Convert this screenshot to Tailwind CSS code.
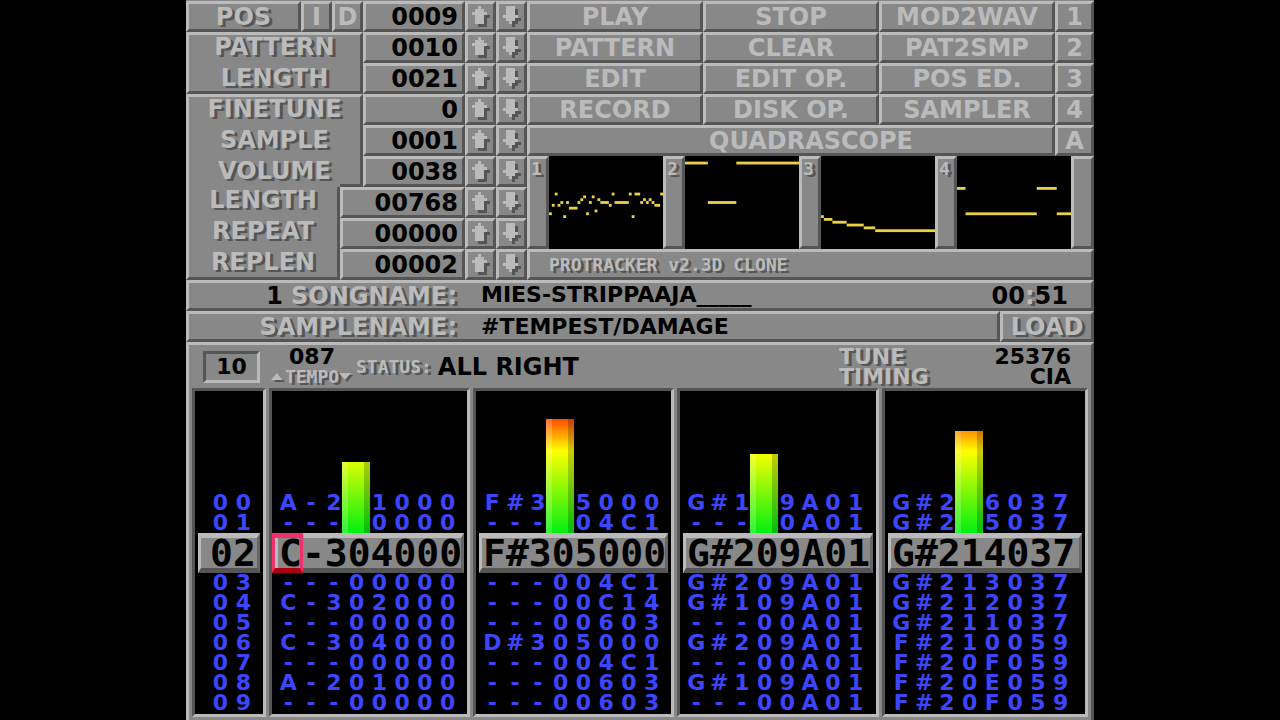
<!DOCTYPE html>
<html lang="en">
<head>
  <meta charset="UTF-8">
  <meta name="viewport" content="width=device-width, initial-scale=1.0">
  <title>ProTracker v2.3D Clone</title>
  <script src="https://cdn.jsdelivr.net/npm/@tailwindcss/browser@4"></script>
</head>
<body class="bg-black font-['DejaVu_Sans',sans-serif] font-bold text-2xl/6 text-[#bbbbbb]">

  <!-- Arrow shapes, used by the value rows -->
  <svg class="hidden">
    <symbol id="up" viewBox="0 0 6 7" shape-rendering="crispEdges">
      <path fill="#555555" d="M3 1h1v1h1v1h1v1h-1v3h-3v-3h-1v-1h1v-1h1z"/>
      <path fill="#bbbbbb" d="M2 0h1v1h1v1h1v1h-1v3h-3v-3h-1v-1h1v-1h1z"/>
    </symbol>
    <symbol id="down" viewBox="0 0 6 7" shape-rendering="crispEdges">
      <path fill="#555555" d="M2 1h3v3h1v1h-1v1h-1v1h-1v-1h-1v-1h-1v-1h1z"/>
      <path fill="#bbbbbb" d="M1 0h3v3h1v1h-1v1h-1v1h-1v-1h-1v-1h-1v-1h1z"/>
    </symbol>
  </svg>

  <main class="w-full max-w-[908px] mx-auto bg-[#888888]">

    <div class="flex pt-px">
      <!-- Position, pattern and sample values -->
      <section class="flex w-[341px] shrink-0">
        <div class="flex-1">
          <div class="flex">
            <div class="flex-1">
              <div class="flex h-[31px] [text-shadow:3px_2px_0_#555]">
                <div class="flex-1 flex items-center justify-center border-3 border-t-[#bbb] border-l-[#bbb] border-r-[#555] border-b-[#555]">POS</div>
                <button class="w-[31px] border-3 border-t-[#bbb] border-l-[#bbb] border-r-[#555] border-b-[#555]">I</button>
                <button class="w-[31px] border-3 border-t-[#bbb] border-l-[#bbb] border-r-[#555] border-b-[#555]">D</button>
              </div>
              <div class="h-[62px] flex flex-col gap-[7px] text-center border-3 border-t-[#bbb] border-l-[#bbb] border-r-[#555] border-b-[#555] [text-shadow:3px_2px_0_#555]">
                <div>PATTERN</div>
                <div>LENGTH</div>
              </div>
              <div class="h-[93px] flex flex-col gap-[7px] text-center border-t-3 border-l-3 border-r-3 border-t-[#bbb] border-l-[#bbb] border-r-[#555] [text-shadow:3px_2px_0_#555]">
                <div>FINETUNE</div>
                <div>SAMPLE</div>
                <div class="-mb-[7px]">VOLUME</div>
                <div class="self-end mt-auto w-5 h-[3px] shrink-0 bg-[#555]"></div>
              </div>
            </div>
            <div id="values" class="w-[102px] text-black"></div>
          </div>
          <div class="flex">
            <div class="flex-1 flex flex-col gap-[7px] h-[93px] pt-px text-center border-l-3 border-r-3 border-b-3 border-l-[#bbb] border-r-[#555] border-b-[#555] [text-shadow:3px_2px_0_#555]">
              <div>LENGTH</div>
              <div>REPEAT</div>
              <div>REPLEN</div>
            </div>
            <div id="longValues" class="w-[125px] text-black"></div>
          </div>
        </div>
        <div id="arrows" class="grid grid-cols-2 w-[62px]"></div>
      </section>

      <!-- Menu buttons, scopes and version -->
      <section class="flex-1">
        <div id="menu" class="grid grid-cols-[176fr_176fr_176fr_39fr] [text-shadow:3px_2px_0_#555]"></div>
        <div class="grid grid-cols-[528fr_39fr] h-[31px] [text-shadow:3px_2px_0_#555]">
          <button class="pl-10 border-3 border-t-[#bbb] border-l-[#bbb] border-r-[#555] border-b-[#555]">QUADRASCOPE</button>
          <button class="border-3 border-t-[#bbb] border-l-[#bbb] border-r-[#555] border-b-[#555]">A</button>
        </div>
        <div class="flex h-[93px] bg-black">
          <div id="scopes" class="flex flex-1"></div>
          <div class="w-[23px] bg-[#888] border-3 border-t-[#bbb] border-l-[#bbb] border-r-[#555] border-b-[#555]"></div>
        </div>
        <div class="h-[31px] flex items-center pl-[19px] border-3 border-t-[#bbb] border-l-[#bbb] border-r-[#555] border-b-[#555] font-['DejaVu_Sans_Mono',monospace] text-[18px]/5 [text-shadow:3px_2px_0_#555]">PROTRACKER v2.3D CLONE</div>
      </section>
    </div>

    <!-- Song name -->
    <div class="flex items-center h-[31px] pr-[23px] border-3 border-t-[#bbb] border-l-[#bbb] border-r-[#555] border-b-[#555]">
      <label for="songname" class="w-[268px] text-right [text-shadow:3px_2px_0_#555]"><span class="text-black [text-shadow:none] mr-2">1</span>SONGNAME:</label>
      <input id="songname" type="text" value="MIES-STRIPPAAJA_____" class="flex-1 min-w-0 ml-6 h-full pb-[2px] text-[22px]/6 text-black outline-none">
      <div class="text-black">00<span class="text-[#bbb] [text-shadow:3px_2px_0_#555]">:</span>51</div>
    </div>

    <!-- Sample name -->
    <div class="flex h-[31px]">
      <div class="flex-1 flex items-center border-3 border-t-[#bbb] border-l-[#bbb] border-r-[#555] border-b-[#555]">
        <label for="samplename" class="w-[268px] text-right [text-shadow:3px_2px_0_#555]">SAMPLENAME:</label>
        <input id="samplename" type="text" value="#TEMPEST/DAMAGE" class="flex-1 min-w-0 ml-6 h-full text-[22px]/6 text-black outline-none">
      </div>
      <button class="w-[94px] border-3 border-t-[#bbb] border-l-[#bbb] border-r-[#555] border-b-[#555] [text-shadow:3px_2px_0_#555]">LOAD</button>
    </div>

    <div class="border-t-3 border-l-3 border-r-3 border-t-[#bbb] border-l-[#bbb] border-r-[#555] pb-[3px]">
      <!-- Status line -->
      <div class="flex items-center h-[43px] pl-[14px] pr-[20px] text-[22px]/5">
        <div class="w-[57px] h-8 flex items-center justify-center border-3 border-t-[#555] border-l-[#555] border-r-[#bbb] border-b-[#bbb] text-black">10</div>
        <div class="ml-2 w-[88px]">
          <div class="text-black text-center">087</div>
          <div class="flex items-center justify-center font-['DejaVu_Sans_Mono',monospace] text-[18px]/5 [text-shadow:3px_2px_0_#555]">
            <button aria-label="Tempo up">
              <svg class="w-[14px] h-[10px]" viewBox="0 0 14 10"><path fill="#555" d="M3 10l5-7 6 7z"/><path fill="#bbb" d="M0 8l6-7 6 7z"/></svg>
            </button>
            <span>TEMPO</span>
            <button aria-label="Tempo down">
              <svg class="w-[14px] h-[10px]" viewBox="0 0 14 10"><path fill="#555" d="M2 3h12l-6 7z"/><path fill="#bbb" d="M0 1h12l-6 7z"/></svg>
            </button>
          </div>
        </div>
        <div class="font-['DejaVu_Sans_Mono',monospace] text-[18px]/5 [text-shadow:3px_2px_0_#555]">STATUS:</div>
        <div class="ml-[6px] flex-1 text-2xl/6 text-black">ALL RIGHT</div>
        <dl class="grid grid-cols-[120px_112px]">
          <dt class="[text-shadow:3px_2px_0_#555]">TUNE</dt>
          <dd class="text-right text-black">25376</dd>
          <dt class="[text-shadow:3px_2px_0_#555]">TIMING</dt>
          <dd class="text-right text-black">CIA</dd>
        </dl>
      </div>

      <!-- Pattern data -->
      <table class="w-full table-fixed border-separate border-spacing-x-[3px] border-spacing-y-0 text-[22px]/5 text-[#3c46ff]">
        <colgroup>
          <col class="w-[74px]">
          <col class="w-[201px]">
          <col class="w-[201px]">
          <col class="w-[202px]">
          <col>
        </colgroup>
        <thead>
          <tr>
            <th aria-label="Row" class="h-[105px] bg-black border-t-3 border-l-3 border-r-3 border-t-[#555] border-l-[#555] border-r-[#bbb]"></th>
            <th aria-label="Track 1" class="bg-black border-t-3 border-l-3 border-r-3 border-t-[#555] border-l-[#555] border-r-[#bbb]"></th>
            <th aria-label="Track 2" class="bg-black border-t-3 border-l-3 border-r-3 border-t-[#555] border-l-[#555] border-r-[#bbb]"></th>
            <th aria-label="Track 3" class="bg-black border-t-3 border-l-3 border-r-3 border-t-[#555] border-l-[#555] border-r-[#bbb]"></th>
            <th aria-label="Track 4" class="bg-black border-t-3 border-l-3 border-r-3 border-t-[#555] border-l-[#555] border-r-[#bbb]"></th>
          </tr>
        </thead>
        <tbody id="pattern"></tbody>
        <tfoot>
          <tr>
            <td class="h-1 bg-black border-l-3 border-r-3 border-b-3 border-l-[#555] border-r-[#bbb] border-b-[#bbb]"></td>
            <td class="bg-black border-l-3 border-r-3 border-b-3 border-l-[#555] border-r-[#bbb] border-b-[#bbb]"></td>
            <td class="bg-black border-l-3 border-r-3 border-b-3 border-l-[#555] border-r-[#bbb] border-b-[#bbb]"></td>
            <td class="bg-black border-l-3 border-r-3 border-b-3 border-l-[#555] border-r-[#bbb] border-b-[#bbb]"></td>
            <td class="bg-black border-l-3 border-r-3 border-b-3 border-l-[#555] border-r-[#bbb] border-b-[#bbb]"></td>
          </tr>
        </tfoot>
      </table>
    </div>
  </main>

  <script>
    const bevel = 'border-3 border-t-[#bbb] border-l-[#bbb] border-r-[#555] border-b-[#555]';

    // Values next to the labels
    const valueRow = v => `<div class="h-[31px] flex items-center justify-end pr-1 ${bevel}">${v}</div>`;
    document.getElementById('values').innerHTML =
      ['0009', '0010', '0021', '0', '0001', '0038'].map(valueRow).join('');
    document.getElementById('longValues').innerHTML =
      ['00768', '00000', '00002'].map(valueRow).join('');

    // One up and one down button for each value
    const names = ['position', 'pattern', 'length', 'finetune', 'sample', 'volume', 'sample length', 'repeat', 'replen'];
    document.getElementById('arrows').innerHTML = names.map(name => `
      <button aria-label="${name} up" class="h-[31px] flex items-center justify-center ${bevel}"><svg class="w-[18px] h-[21px]"><use href="#up"/></svg></button>
      <button aria-label="${name} down" class="h-[31px] flex items-center justify-center ${bevel}"><svg class="w-[18px] h-[21px]"><use href="#down"/></svg></button>
    `).join('');

    // Menu
    const menu = [
      'PLAY', 'STOP', 'MOD2WAV', '1',
      'PATTERN', 'CLEAR', 'PAT2SMP', '2',
      'EDIT', 'EDIT OP.', 'POS ED.', '3',
      'RECORD', 'DISK OP.', 'SAMPLER', '4'
    ];
    document.getElementById('menu').innerHTML =
      menu.map(text => `<button class="h-[31px] ${bevel}">${text}</button>`).join('');

    // Scopes: every segment is [x, y, length] on a 40x33 screen
    const scopes = [
      [[0,20,1],[1,17,1],[2,13,1],[3,17,1],[4,16,1],[5,21,1],[6,16,1],[7,18,3],[10,16,1],[11,15,1],[12,14,1],[13,20,1],
       [14,16,1],[15,14,1],[16,19,1],[17,15,1],[18,16,3],[21,17,1],[22,13,1],[23,16,5],[28,13,1],[29,21,1],[30,13,2],
       [32,16,1],[33,15,1],[34,16,1],[35,15,1],[36,16,1],[37,17,2],[39,13,1]],
      [[0,2,8],[8,16,10],[18,2,22]],
      [[0,21,1],[1,22,3],[4,23,5],[9,24,6],[15,25,4],[19,26,21]],
      [[0,11,3],[3,20,25],[28,11,7],[35,20,5]]
    ];
    document.getElementById('scopes').innerHTML = scopes.map((lines, i) => `
      <div class="w-[22px] bg-[#888] ${bevel} pl-px font-['DejaVu_Sans_Mono',monospace] text-[18px]/5 [text-shadow:3px_2px_0_#555]">${i + 1}</div>
      <svg class="flex-1 h-full" viewBox="0 0 40 33" preserveAspectRatio="none" fill="#ebd046">
        ${lines.map(([x, y, w]) => `<rect x="${x}" y="${y}" width="${w}" height="1"/>`).join('')}
      </svg>
    `).join('');

    // Pattern rows
    const rows = [
      ['00', 'A-201000', 'F#305000', 'G#109A01', 'G#216037'],
      ['01', '---00000', '---004C1', '---00A01', 'G#215037'],
      ['02', 'C-304000', 'F#305000', 'G#209A01', 'G#214037'],
      ['03', '---00000', '---004C1', 'G#209A01', 'G#213037'],
      ['04', 'C-302000', '---00C14', 'G#109A01', 'G#212037'],
      ['05', '---00000', '---00603', '---00A01', 'G#211037'],
      ['06', 'C-304000', 'D#305000', 'G#209A01', 'F#210059'],
      ['07', '---00000', '---004C1', '---00A01', 'F#20F059'],
      ['08', 'A-201000', '---00603', 'G#109A01', 'F#20E059'],
      ['09', '---00000', '---00603', '---00A01', 'F#20F059']
    ];
    const currentRow = 2;
    const levels = [71, 114, 79, 102];
    const side = 'border-l-3 border-r-3 border-l-[#555] border-r-[#bbb]';

    const digits = text => [...text].map(c => `<span>${c}</span>`).join('');

    document.getElementById('pattern').innerHTML = rows.map((row, r) => {
      if (r !== currentRow) {
        return `<tr>${row.map((text, i) => `
          <td class="h-5 p-0 bg-black ${side}">
            <div class="${i === 0 ? 'grid grid-cols-2 w-[46px] ml-[14px] text-center' : 'grid grid-cols-8 w-[182px] ml-[5px] text-center'}">${digits(text)}</div>
          </td>`).join('')}</tr>`;
      }
      return `<tr>${row.map((text, i) => `
        <td class="relative h-10 p-0 bg-black ${side}">
          ${i > 0 ? `<div class="absolute bottom-full left-[70px] w-7 border-l-6 border-r-6 border-l-white/20 border-r-black/20 bg-[linear-gradient(to_top,#00f010_0px,#ffff00_82px,#ff2000_122px)]" style="height: ${levels[i - 1]}px"></div>` : ''}
          <div class="h-10 mx-[3px] flex items-center whitespace-nowrap bg-[#888] border-t-5 border-b-5 border-l-3 border-r-3 border-t-[#bbb] border-l-[#bbb] border-r-[#666] border-b-[#555] font-['DejaVu_Sans_Mono',monospace] text-[38px]/[30px] text-black ${i === 0 ? 'pl-[9px]' : 'pl-px'}">${text}</div>
          ${i === 1 ? '<div class="absolute top-0 left-0 w-[31px] h-10 border-t-5 border-b-5 border-l-3 border-r-3 border-[#f0306c] border-b-[#aa0010]"></div>' : ''}
        </td>`).join('')}</tr>`;
    }).join('');
  </script>

</body>
</html>
